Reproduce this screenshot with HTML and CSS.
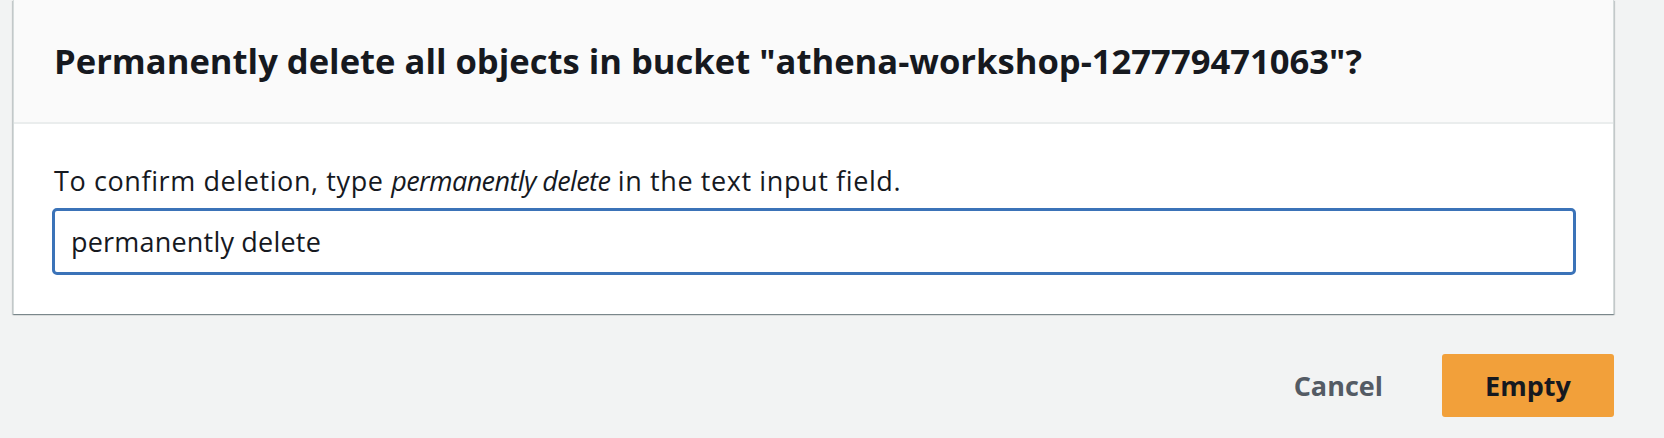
FILE: index.html
```html
<!DOCTYPE html>
<html lang="en">
<head>
<meta charset="utf-8">
<title>Empty bucket</title>
<link rel="stylesheet" href="styles.css">
</head>
<body>
<div class="page">
  <section class="card">
    <header class="card-header">
      <h2 class="title">Permanently delete all objects in bucket "athena-workshop-127779471063"?</h2>
    </header>
    <div class="card-body">
      <p class="hint">To confirm deletion, type <em class="hint-em">permanently delete</em> in the text input field.</p>
      <input class="confirm" type="text" value="permanently delete">
    </div>
  </section>
  <div class="actions">
    <button class="btn-link" type="button">Cancel</button>
    <button class="btn-primary" type="button">Empty</button>
  </div>
</div>
</body>
</html>
```

FILE: styles.css
```css
html, body {
  margin: 0;
  padding: 0;
  background: #f2f3f3;
  font-family: "Open Sans", "Liberation Sans", sans-serif;
  color: #16191f;
}

.page {
  padding: 0 50px 0 13px;
}

.card {
  background: #ffffff;
  border-left: 1px solid #d5dbdb;
  border-right: 1px solid #d5dbdb;
  box-shadow: 0 1px 1px 0 rgba(0, 28, 36, 0.3), 1px 1px 1px 0 rgba(0, 28, 36, 0.15), -1px 1px 1px 0 rgba(0, 28, 36, 0.15);
}

.card-header {
  background: #fafafa;
  height: 124px;
  border-bottom: 2px solid #eaeded;
  box-sizing: border-box;
  display: flex;
  align-items: center;
  padding: 0 40px;
}

.title {
  margin: 0;
  font-size: 34.6px;
  font-weight: 700;
  line-height: 44px;
}

.card-body {
  padding: 40px 37px 39px 38px;
}

.hint {
  margin: 0 0 11px 2px;
  font-size: 27px;
  letter-spacing: 0.6px;
  line-height: 33px;
}

.hint-em {
  letter-spacing: -0.6px;
}

.confirm {
  display: block;
  box-sizing: border-box;
  width: 100%;
  height: 67px;
  margin: 0;
  padding: 0 16px;
  border: 3px solid #3b73b8;
  border-radius: 5px;
  background: #ffffff;
  font-family: inherit;
  font-size: 27px;
  letter-spacing: 0.2px;
  color: #16191f;
  outline: none;
}

.actions {
  display: flex;
  justify-content: flex-end;
  align-items: center;
  gap: 59px;
  padding-top: 40px;
}

.btn-link {
  background: none;
  border: none;
  padding: 0;
  font-family: inherit;
  font-size: 27px;
  font-weight: 700;
  color: #545b64;
}

.btn-primary {
  width: 172px;
  height: 63px;
  background: #f2a03a;
  border: none;
  border-radius: 3px;
  font-family: inherit;
  font-size: 27px;
  font-weight: 700;
  color: #16191f;
}
```
